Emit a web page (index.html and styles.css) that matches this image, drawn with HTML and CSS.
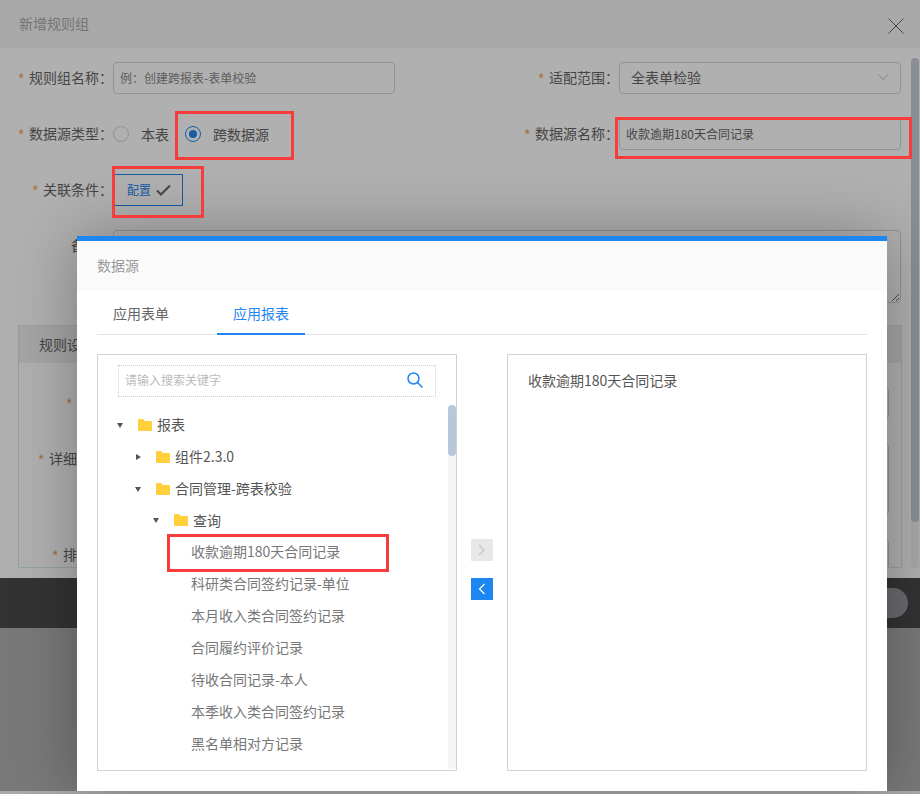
FILE: index.html
```html
<!DOCTYPE html>
<html lang="zh-CN">
<head>
    <meta charset="UTF-8">
    <meta name="viewport" content="width=device-width, initial-scale=1.0">
    <title>新增规则组</title>
    <link rel="stylesheet" href="styles.css">
</head>
<body>
<div class="page">

    <!-- rule group dialog, sits under the mask -->
    <div class="dialog">
        <div class="dialog-head">
            <span class="dialog-title">新增规则组</span>
            <svg class="close-icon" width="16" height="16" viewBox="0 0 16 16"><path d="M.5.5l15 15M15.500.5l-15 15" stroke="#666" fill="none"/></svg>
        </div>
        <div class="dialog-main">
            <div class="form">
                <div class="form-row">
                    <div class="field">
                        <label class="field-label"><span class="req">*</span>规则组名称：</label>
                        <input class="text-input" placeholder="例：创建跨报表-表单校验">
                    </div>
                    <div class="field">
                        <label class="field-label"><span class="req">*</span>适配范围：</label>
                        <div class="select-box">
                            <span>全表单检验</span>
                            <svg width="10" height="6" viewBox="0 0 10 6"><path d="M.5.5L5 5.500 9.500.5" stroke="#bbb" fill="none"/></svg>
                        </div>
                    </div>
                </div>
                <div class="form-row">
                    <div class="field">
                        <label class="field-label"><span class="req">*</span>数据源类型：</label>
                        <div class="radio-group">
                            <span class="radio"></span><span>本表</span>
                            <span class="radio radio-on"></span><span>跨数据源</span>
                        </div>
                    </div>
                    <div class="field">
                        <label class="field-label"><span class="req">*</span>数据源名称：</label>
                        <input class="text-input value-input" value="收款逾期180天合同记录">
                    </div>
                </div>
                <div class="form-row">
                    <div class="field">
                        <label class="field-label"><span class="req">*</span>关联条件：</label>
                        <div class="config-btn">
                            配置
                            <svg width="15" height="12" viewBox="0 0 15 12"><path d="M1 6.500l4 4L14 1.500" stroke="#666" stroke-width="2" fill="none"/></svg>
                        </div>
                    </div>
                </div>
                <div class="form-row">
                    <label class="field-label">备注：</label>
                    <textarea class="note-area"></textarea>
                </div>
                <div class="rule-card">
                    <div class="rule-card-head">规则设置</div>
                    <div class="rule-card-body">
                        <div class="rule-row">
                            <label class="rule-label"><span class="req">*</span>名称：</label>
                            <div class="rule-input"></div>
                        </div>
                        <div class="rule-row">
                            <label class="rule-label"><span class="req">*</span>详细描述：</label>
                            <div class="rule-input rule-input-tall"></div>
                        </div>
                        <div class="rule-row">
                            <label class="rule-label"><span class="req">*</span>排序号：</label>
                            <div class="rule-input"></div>
                        </div>
                    </div>
                </div>
            </div>
            <div class="dialog-scroll"><div class="dialog-thumb"></div></div>
        </div>
    </div>

    <div class="dark-bar"><div class="dark-pill"></div></div>
    <div class="below-bar"></div>

    <div class="mask"></div>

    <!-- data source picker -->
    <div class="modal">
        <div class="modal-head">数据源</div>
        <div class="modal-body">
            <div class="tabs">
                <div class="tab">应用表单</div>
                <div class="tab tab-active">应用报表</div>
            </div>
            <div class="transfer">
                <div class="panel">
                    <div class="search">
                        <span>请输入搜索关键字</span>
                        <svg width="16" height="16" viewBox="0 0 16 16"><circle cx="6.500" cy="6.500" r="5.500" stroke="#1e86f0" stroke-width="1.500" fill="none"/><path d="M10.500 10.500l5 5" stroke="#1e86f0" stroke-width="1.500" fill="none"/></svg>
                    </div>
                    <div class="tree-wrap">
                        <div class="tree">
                            <div class="node lv1">
                                <span class="caret caret-down"></span>
                                <svg class="folder" width="14" height="12" viewBox="0 0 14 12"><path d="M0 1a1 1 0 0 1 1-1h4l2 2h6a1 1 0 0 1 1 1v8a1 1 0 0 1-1 1H1a1 1 0 0 1-1-1z"/></svg>
                                报表
                            </div>
                            <div class="node lv2">
                                <span class="caret caret-right"></span>
                                <svg class="folder" width="14" height="12" viewBox="0 0 14 12"><path d="M0 1a1 1 0 0 1 1-1h4l2 2h6a1 1 0 0 1 1 1v8a1 1 0 0 1-1 1H1a1 1 0 0 1-1-1z"/></svg>
                                组件2.3.0
                            </div>
                            <div class="node lv2">
                                <span class="caret caret-down"></span>
                                <svg class="folder" width="14" height="12" viewBox="0 0 14 12"><path d="M0 1a1 1 0 0 1 1-1h4l2 2h6a1 1 0 0 1 1 1v8a1 1 0 0 1-1 1H1a1 1 0 0 1-1-1z"/></svg>
                                合同管理-跨表校验
                            </div>
                            <div class="node lv3">
                                <span class="caret caret-down"></span>
                                <svg class="folder" width="14" height="12" viewBox="0 0 14 12"><path d="M0 1a1 1 0 0 1 1-1h4l2 2h6a1 1 0 0 1 1 1v8a1 1 0 0 1-1 1H1a1 1 0 0 1-1-1z"/></svg>
                                查询
                            </div>
                            <div class="leaf">收款逾期180天合同记录</div>
                            <div class="leaf">科研类合同签约记录-单位</div>
                            <div class="leaf">本月收入类合同签约记录</div>
                            <div class="leaf">合同履约评价记录</div>
                            <div class="leaf">待收合同记录-本人</div>
                            <div class="leaf">本季收入类合同签约记录</div>
                            <div class="leaf">黑名单相对方记录</div>
                        </div>
                        <div class="tree-scroll"><div class="tree-thumb"></div></div>
                    </div>
                </div>
                <div class="arrows">
                    <div class="arrow-btn arrow-off">
                        <svg width="8" height="12" viewBox="0 0 8 12"><path d="M1 1l5 5-5 5" stroke="#c4c4c4" stroke-width="1.200" fill="none"/></svg>
                    </div>
                    <div class="arrow-btn arrow-on">
                        <svg width="8" height="12" viewBox="0 0 8 12"><path d="M6.500 1l-5 5 5 5" stroke="#fff" stroke-width="1.200" fill="none"/></svg>
                    </div>
                </div>
                <div class="panel panel-right">收款逾期180天合同记录</div>
            </div>
        </div>
    </div>

    <!-- red annotation boxes drawn on the screenshot -->
    <div class="mark mark-radio"></div>
    <div class="mark mark-config"></div>
    <div class="mark mark-name"></div>
    <div class="mark mark-leaf"></div>
</div>
</body>
</html>
```

FILE: styles.css
```css
* {
    box-sizing: border-box;
}
body {
    margin: 0;
    font-family: "Noto Sans CJK SC", "Liberation Sans", sans-serif;
    font-size: 14px;
    color: #666;
}
.page {
    position: relative;
    width: 920px;
    height: 794px;
    overflow: hidden;
    background: #f5f5f5;
}

/* dialog under the mask */
.dialog {
    height: 578px;
    background: #fff;
    display: flex;
    flex-direction: column;
}
.dialog-head {
    height: 48px;
    flex: none;
    padding: 0 16px 2px 19px;
    background: #f5f5f5;
    display: flex;
    align-items: center;
    justify-content: space-between;
}
.dialog-title {
    color: #aaa;
}
.close-icon {
    margin-top: 6px;
}
.dialog-main {
    flex: 1;
    min-height: 0;
    display: flex;
}
.form {
    flex: 1;
    min-width: 0;
    padding: 14px 10px 0 18px;
    display: flex;
    flex-direction: column;
    gap: 24px;
}
.form-row {
    display: flex;
    justify-content: space-between;
}
.field {
    width: 377px;
    display: flex;
}
.field-label {
    width: 95px;
    height: 32px;
    flex: none;
    line-height: 30px;
    text-align: right;
    white-space: nowrap;
}
.req {
    font-family: "Liberation Sans", sans-serif;
    line-height: 1;
    color: #f09a3e;
    margin-right: 5px;
}
.text-input {
    flex: 1;
    min-width: 0;
    height: 32px;
    padding: 0 6px 2px;
    border: 1px solid #d4d4d4;
    border-radius: 4px;
    font: 12px "Noto Sans CJK SC", "Liberation Sans", sans-serif;
    color: #666;
    background: #fff;
    outline: none;
}
.text-input::placeholder {
    color: #888;
    opacity: 1;
}
.select-box {
    flex: 1;
    height: 32px;
    padding: 0 12px 2px 11px;
    border: 1px solid #d4d4d4;
    border-radius: 4px;
    display: flex;
    align-items: center;
    justify-content: space-between;
}
.radio-group {
    display: flex;
    align-items: center;
    height: 32px;
    line-height: 30px;
}
.radio {
    width: 16px;
    height: 16px;
    margin-right: 12px;
    border: 1px solid #d4d4d4;
    border-radius: 50%;
    display: flex;
    align-items: center;
    justify-content: center;
}
.radio-group span:nth-child(2) {
    margin-right: 16px;
}
.radio-on {
    border-color: #1e86f0;
}
.radio-on::after {
    content: "";
    width: 8px;
    height: 8px;
    border-radius: 50%;
    background: #1e86f0;
}
.config-btn {
    width: 70px;
    height: 32px;
    padding: 0 0 2px 13px;
    border: 1px solid #1e86f0;
    color: #1e86f0;
    font-size: 12px;
    display: flex;
    align-items: center;
    gap: 5px;
}
.config-btn svg {
    margin-top: 2px;
}
.note-area {
    flex: none;
    width: 788px;
    height: 73px;
    padding: 6px;
    border: 1px solid #d4d4d4;
    border-radius: 4px;
    background: #fff;
    outline: none;
}
.rule-card {
    height: 243px;
    margin: -2px -1px 0 0;
    border: 1px solid #d5e9f2;
    overflow: hidden;
    flex: none;
}
.rule-card-head {
    height: 37px;
    padding-left: 20px;
    line-height: 36px;
    background: #f0f0f0;
}
.rule-card-body {
    padding: 24px 12px 0 0;
    display: flex;
    flex-direction: column;
    gap: 24px;
}
.rule-row {
    display: flex;
}
.rule-label {
    width: 100px;
    height: 32px;
    flex: none;
    line-height: 30px;
    text-align: right;
    white-space: nowrap;
}
.rule-input {
    flex: 1;
    height: 32px;
    border: 1px solid #d4d4d4;
    border-radius: 4px;
}
.rule-input-tall {
    height: 72px;
}
.dialog-scroll {
    width: 8px;
    flex: none;
    margin: 10px 1px 10px 0;
    border-radius: 4px;
    background: #f4f4f4;
}
.dialog-thumb {
    height: 464px;
    border-radius: 4px;
    background: #c8d0d8;
}
.dark-bar {
    height: 50px;
    padding-right: 12px;
    background: #4a4a4a;
    display: flex;
    align-items: center;
    justify-content: flex-end;
}
.dark-pill {
    width: 60px;
    height: 30px;
    border-radius: 15px;
    background: #9c98a0;
}
.below-bar {
    height: 163px;
    background: #b0b0b0;
}
.mask {
    position: absolute;
    inset: 0;
    background: rgba(0, 0, 0, 0.31);
}

/* data source picker */
.modal {
    position: absolute;
    left: 77px;
    top: 236px;
    width: 810px;
    height: 555px;
    border-top: 5px solid #1e86f0;
    background: #fff;
    box-shadow: 0 0 60px rgba(0, 0, 0, 0.3);
}
.modal-head {
    height: 50px;
    padding-left: 20px;
    line-height: 48px;
    background: #fafafa;
    color: #999;
}
.modal-body {
    padding: 0 20px;
}
.tabs {
    height: 44px;
    border-bottom: 1px solid #e4e4e4;
    display: flex;
    gap: 32px;
}
.tab {
    width: 88px;
    height: 44px;
    line-height: 44px;
    text-align: center;
    color: #666;
}
.tab-active {
    color: #1e86f0;
    border-bottom: 2px solid #1e86f0;
}
.transfer {
    margin-top: 19px;
    height: 417px;
    display: flex;
}
.panel {
    width: 360px;
    flex: none;
    border: 1px solid #d2d2d2;
    display: flex;
    flex-direction: column;
}
.panel-right {
    display: block;
    padding: 15px 20px;
    color: #555;
}
.search {
    height: 32px;
    flex: none;
    margin: 10px 20px 0;
    padding: 0 12px 3px 6px;
    border: 1px dotted #cfcfcf;
    display: flex;
    align-items: center;
    justify-content: space-between;
    font-size: 12px;
    color: #bbb;
}
.search svg {
    margin-top: 1px;
}
.tree-wrap {
    flex: 1;
    min-height: 0;
    margin-top: 8px;
    display: flex;
}
.tree {
    flex: 1;
    padding-top: 4px;
}
.node, .leaf {
    height: 32px;
    line-height: 30px;
    white-space: nowrap;
}
.node {
    padding-bottom: 2px;
    display: flex;
    align-items: center;
    color: #555;
}
.lv1 {
    padding-left: 16px;
}
.lv2 {
    padding-left: 34px;
}
.lv3 {
    height: 31px;
    padding-left: 52px;
}
.leaf {
    padding-left: 93px;
    color: #777;
}
.caret {
    width: 12px;
    flex: none;
    margin-top: 2px;
    display: flex;
    justify-content: center;
}
.caret::before {
    content: "";
    border-style: solid;
    border-color: transparent;
}
.caret-down::before {
    border-width: 5px 3.500px 0;
    border-top-color: #555;
}
.caret-right::before {
    border-width: 3.500px 0 3.500px 5px;
    border-left-color: #555;
}
.folder {
    fill: #ffd03b;
    margin: 1px 5px 0 12px;
    flex: none;
}
.tree-scroll {
    width: 8px;
    flex: none;
    margin-bottom: 1px;
    background: #f5f5f5;
    border-radius: 4px;
}
.tree-thumb {
    height: 51px;
    border-radius: 4px;
    background: #b8c8dc;
}
.arrows {
    width: 50px;
    flex: none;
    padding-top: 14px;
    display: flex;
    flex-direction: column;
    align-items: center;
    justify-content: center;
    gap: 17px;
}
.arrow-btn {
    width: 22px;
    height: 22px;
    display: flex;
    align-items: center;
    justify-content: center;
}
.arrow-off {
    background: #e8e8e8;
}
.arrow-on {
    background: #1e86f0;
}

/* annotations */
.mark {
    position: absolute;
    border: 3px solid #f83c3c;
}
.mark-radio {
    left: 175px;
    top: 111px;
    width: 119px;
    height: 49px;
}
.mark-config {
    left: 112px;
    top: 166px;
    width: 92px;
    height: 52px;
}
.mark-name {
    left: 615px;
    top: 117px;
    width: 297px;
    height: 42px;
}
.mark-leaf {
    left: 167px;
    top: 534px;
    width: 222px;
    height: 38px;
}
```
